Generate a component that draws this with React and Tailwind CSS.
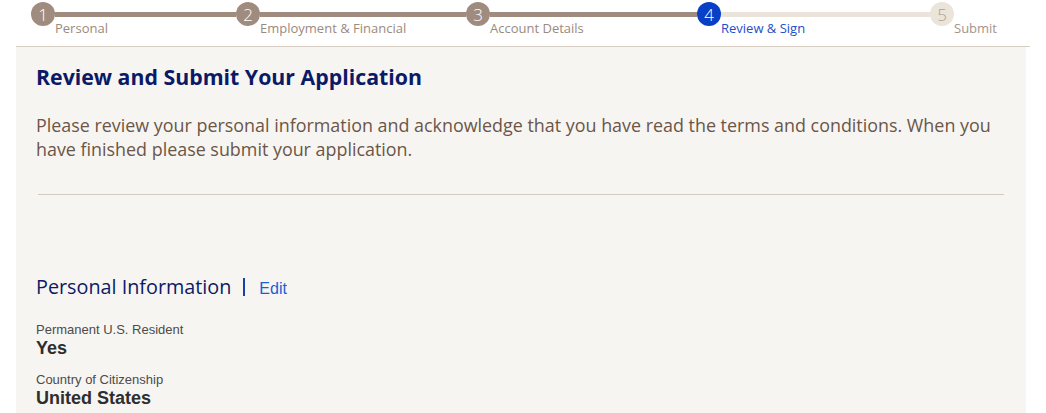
import React from 'react';

const steps = [
    { n: 1, label: 'Personal', state: 'done' },
    { n: 2, label: 'Employment & Financial', state: 'done' },
    { n: 3, label: 'Account Details', state: 'done' },
    { n: 4, label: 'Review & Sign', state: 'current' },
    { n: 5, label: 'Submit', state: 'todo' },
];

const lineWidths = ['w-[181px]', 'w-[206px]', 'w-[207px]', 'w-[209px]'];

const circleClass = {
    done: 'bg-[#a08c7e] text-white',
    current: 'bg-[#0740c6] text-white',
    todo: 'bg-[#ebe4da] text-[#b09f90]',
};

const labelClass = {
    done: 'text-[#9a8a7e]',
    current: 'text-[#1c4fc9]',
    todo: 'text-[#a39488]',
};

const Step = ({ step }) => (
    <div className="relative shrink-0">
        <div className={`w-[24px] h-[24px] rounded-full flex items-center justify-center text-[17px] leading-none font-light ${circleClass[step.state]}`}>
            {step.n}
        </div>
        <span className={`absolute left-[24px] top-[17px] whitespace-nowrap text-[13px] ${labelClass[step.state]}`}>
            {step.label}
        </span>
    </div>
);

const Field = ({ label, value }) => (
    <div className="mb-[14px]" style={{ fontFamily: '"Liberation Sans", Arial, sans-serif' }}>
        <div className="text-[13px] leading-[16px] text-[#4b4b4b]">{label}</div>
        <div className="text-[18px] leading-[20px] font-bold text-[#2e2e2e]">{value}</div>
    </div>
);

export default function App() {
    return (
        <div className="w-[1046px] h-[413px] overflow-hidden bg-white" style={{ fontFamily: '"Open Sans", "Noto Sans", sans-serif' }}>
            {/* stepper */}
            <div className="h-[46px] pt-[2px] pl-[31px]">
                <div className="flex items-center">
                    {steps.map((s, i) => (
                        <React.Fragment key={s.n}>
                            <Step step={s} />
                            {i < lineWidths.length && (
                                <div className={`h-[5px] ${lineWidths[i]} ${i < 3 ? 'bg-[#a08c7e]' : 'bg-[#ebe4da]'}`} />
                            )}
                        </React.Fragment>
                    ))}
                </div>
            </div>
            <div className="mx-[16px] w-[1014px] h-px bg-[#d6cdc3]" />

            {/* panel */}
            <div className="ml-[16px] w-[1010px] h-[366px] bg-[#f7f5f2] pl-[20px] pr-[22px]">
                <h1 className="pt-[16px] text-[21.3px] leading-[28px] font-bold text-[#0b1a66]">
                    Review and Submit Your Application
                </h1>
                <p className="mt-[22px] w-[966px] text-[17.9px] leading-[24px] text-[#6b5647]">
                    Please review your personal information and acknowledge that you have read the terms and conditions. When you have finished please submit your application.
                </p>
                <div className="mt-[33px] ml-[2px] w-[966px] h-px bg-[#d3cbc2]" />

                <div className="mt-[78px] flex items-baseline">
                    <h2 className="text-[19.8px] leading-[28px] text-[#0b1a66]">Personal Information</h2>
                    <span className="ml-[12px] w-[2px] h-[18px] self-center bg-[#1c3fa6]" />
                    <a className="ml-[14px] text-[16px] text-[#1a5fd6]" style={{ fontFamily: '"Liberation Sans", Arial, sans-serif' }}>Edit</a>
                </div>
                <div className="mt-[21px]">
                    <Field label="Permanent U.S. Resident" value="Yes" />
                    <Field label="Country of Citizenship" value="United States" />
                </div>
            </div>
        </div>
    );
}
